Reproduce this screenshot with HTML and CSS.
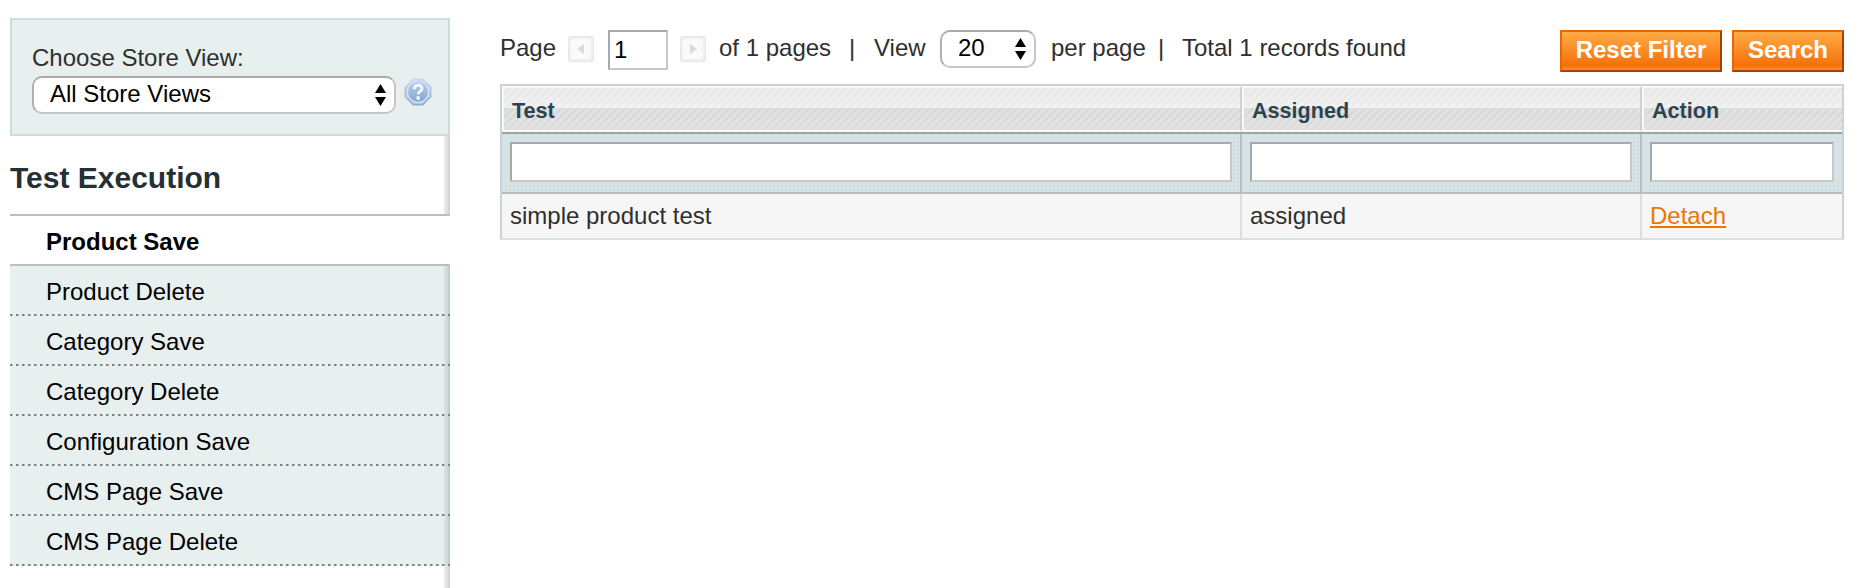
FILE: index.html
```html
<!DOCTYPE html>
<html lang="en">
<head>
<meta charset="utf-8">
<title>Test Execution</title>
<link rel="stylesheet" href="styles.css">
</head>
<body>
<div class="page">
  <aside class="side">
    <section class="switcher">
      <label class="switcher-label">Choose Store View:</label>
      <div class="switcher-row">
        <div class="select store-select"><span>All Store Views</span>
          <svg class="arrows" width="12" height="22" viewBox="0 0 12 22"><path d="M6.500 0L12 9H1zM6.500 22L12 13H1z"/></svg>
        </div>
        <svg class="help" width="28" height="28" viewBox="0 0 28 28">
          <defs><linearGradient id="help-fill" x1="0" y1="0" x2="0" y2="1"><stop offset="0" stop-color="#b4cbe7"/><stop offset="1" stop-color="#86a8ce"/></linearGradient>
          <linearGradient id="help-rim" x1="0" y1="0" x2="0" y2="1"><stop offset="0" stop-color="#c9dcf1"/><stop offset="1" stop-color="#8eabce"/></linearGradient></defs>
          <path d="M9 .5h10L27.500 9v10L19 27.500H9L.5 19V9z" fill="url(#help-rim)"/>
          <path d="M9.700 2.500h8.600l7.200 7.200v8.600l-7.200 7.200H9.700l-7.200-7.200V9.700z" fill="#cfdff1"/>
          <circle cx="14" cy="14" r="9.800" fill="url(#help-fill)"/>
          <path d="M10.300 11.200c0-5 7.700-5 7.700-.7 0 3-3.800 2.800-3.800 5.800" fill="none" stroke="#f3f7fc" stroke-width="3"/>
          <circle cx="14.200" cy="20" r="1.900" fill="#f3f7fc"/>
        </svg>
      </div>
    </section>
    <h3 class="side-title">Test Execution</h3>
    <ul class="tabs">
      <li class="tab active">Product Save</li>
      <li class="tab">Product Delete</li>
      <li class="tab">Category Save</li>
      <li class="tab">Category Delete</li>
      <li class="tab">Configuration Save</li>
      <li class="tab">CMS Page Save</li>
      <li class="tab">CMS Page Delete</li>
    </ul>
  </aside>
  <main class="main">
    <div class="toolbar">
      <span class="page-word">Page</span>
      <svg class="nav prev" width="26" height="26" viewBox="0 0 26 26"><rect x=".5" y=".5" width="25" height="25" rx="2" fill="#f0f0f0" stroke="#e6e6e6"/><rect x="3" y="3" width="20" height="20" rx="3" fill="#fafafa"/><path d="M16 8v10l-7-5z" fill="#dadada"/></svg>
      <input class="field page-input" value="1">
      <svg class="nav next" width="26" height="26" viewBox="0 0 26 26"><rect x=".5" y=".5" width="25" height="25" rx="2" fill="#f0f0f0" stroke="#e6e6e6"/><rect x="3" y="3" width="20" height="20" rx="3" fill="#fafafa"/><path d="M10 8v10l7-5z" fill="#dadada"/></svg>
      <span class="of-pages">of 1 pages</span>
      <span class="bar bar-first">|</span>
      <span class="view-word">View</span>
      <div class="select size-select"><span>20</span>
        <svg class="arrows" width="12" height="22" viewBox="0 0 12 22"><path d="M6.500 0L12 9H1zM6.500 22L12 13H1z"/></svg>
      </div>
      <span class="per-page">per page</span>
      <span class="bar bar-second">|</span>
      <span class="total">Total 1 records found</span>
      <div class="actions">
        <button class="btn btn-reset">Reset Filter</button>
        <button class="btn btn-search">Search</button>
      </div>
    </div>
    <div class="grid">
      <div class="row head"><div class="cell">Test</div><div class="cell">Assigned</div><div class="cell">Action</div></div>
      <div class="row filter"><div class="cell"><input class="field"></div><div class="cell"><input class="field"></div><div class="cell"><input class="field"></div></div>
      <div class="row data"><div class="cell">simple product test</div><div class="cell">assigned</div><div class="cell"><a class="link" href="#">Detach</a></div></div>
    </div>
  </main>
</div>
</body>
</html>
```
FILE: styles.css
```css
* { box-sizing: border-box; }
body {
  margin: 0;
  height: 588px;
  overflow: hidden;
  background: #fff;
  color: #2f2f2f;
  font: 24px/28px "Liberation Sans", Arial, sans-serif;
}
input, button { font: inherit; margin: 0; }
.page { display: flex; height: 588px; padding: 18px 20px 0 10px; gap: 50px; }

/* Sidebar */
.side {
  display: flex;
  flex-direction: column;
  width: 440px;
  background: linear-gradient(90deg, #ececec, #e2e2e2 50%, #cbcbcb) right / 6px 100% no-repeat;
}
.switcher {
  height: 118px;
  padding: 24px 14px 0 20px;
  border: 2px solid #cddddd;
  background: #e7efef;
}
.switcher-label { display: block; height: 32px; }
.switcher-row { display: flex; gap: 8px; }
.select {
  display: flex;
  align-items: center;
  justify-content: space-between;
  height: 38px;
  padding: 0 8px 2px 16px;
  border: 2px solid #c6c6c6;
  border-top-color: #a9a9a9;
  border-left-color: #b0b0b0;
  border-radius: 10px;
  background: #fff;
  color: #000;
}
.arrows { display: block; margin-top: 2px; }
.store-select { width: 364px; }
.help { margin-top: 2px; }
.side-title {
  height: 78px;
  margin: 0;
  padding-top: 24px;
  color: #253033;
  font-size: 30px;
  line-height: 36px;
}
.tabs { margin: 0; padding: 0; list-style: none; }
.tab {
  height: 50px;
  padding: 12px 36px 0;
  background:
    repeating-linear-gradient(90deg, #7c8282 0 2px, #b4baba 2px 3px, transparent 3px 6px) bottom / 100% 2px no-repeat,
    linear-gradient(90deg, #d8e4e4, #cfdddd 50%, #b5c6c6) right / 6px 100% no-repeat,
    #e7efef;
  color: #000;
}
.tab.active {
  height: 52px;
  border: solid #bebebe;
  border-width: 2px 0;
  background: #fff;
  font-weight: 700;
}

/* Pager and actions */
.main { width: 1344px; }
.toolbar { display: flex; height: 66px; padding-top: 12px; }
.toolbar > span { padding-top: 4px; white-space: nowrap; }
.page-word { width: 68px; }
.nav { margin-top: 6px; }
.field {
  display: block;
  height: 40px;
  padding: 0 6px 2px;
  border: 2px solid #c8c8c8;
  border-top-color: #a9a9a9;
  border-left-color: #a9a9a9;
  border-radius: 0;
  background: #fff;
  color: #000;
}
.page-input { width: 60px; margin: 0 12px 0 14px; padding: 0 4px; }
.of-pages { width: 143px; padding-left: 13px; }
.bar-first { width: 25px; }
.view-word { width: 66px; }
.size-select { width: 96px; }
.per-page { width: 122px; padding-left: 15px; }
.bar-second { width: 24px; }
.actions { display: flex; gap: 10px; margin-left: auto; }
.btn {
  height: 42px;
  padding: 0 0 2px;
  border: 2px solid #ed6502;
  border-right-color: #a04300;
  border-bottom-color: #a04300;
  border-radius: 0;
  background: linear-gradient(#ffac47, #f76f07 90%, #ff852e 96%);
  color: #fff;
  font-weight: 700;
}
.btn-reset { width: 162px; }
.btn-search { width: 112px; }

/* Data grid */
.grid { border: 2px solid #cbd3d4; border-bottom-color: #dadfe0; }
.row { display: grid; grid-template-columns: 740px 400px 200px; }
.cell { border-right: 2px solid #dadfe0; }
.row .cell:last-child { border-right: 0; }
.head { border-bottom: 2px solid #9ba5a3; }
.head .cell {
  height: 46px;
  padding: 9px 8px 0;
  border: 2px solid #f9f9f9;
  border-right-color: #cfcfcf;
  background:
    repeating-linear-gradient(135deg, rgba(255,255,255,.25) 0 2px, transparent 3.200px 4.500px, rgba(255,255,255,.25) 5.657px) padding-box,
    linear-gradient(#e6e6e6 0, #eee 20px, #d6d6d6 20px, #dcdcdc 100%) padding-box;
  color: #2d444f;
  font-size: 21.6px;
  font-weight: 700;
}
.filter { border-bottom: 2px solid #bcbcbc; }
.filter .cell {
  height: 58px;
  padding: 8px;
  border-right-color: #bcbcbc;
  background: radial-gradient(circle, #d9e7ea 1px, transparent 1.500px) 0 0 / 4px 4px, #d1e1e4;
}
.filter .field { width: 100%; }
.data .cell { height: 44px; padding: 8px; background: #f6f6f6; }
.link { color: #ea7601; text-decoration-thickness: 2px; text-underline-offset: 2px; }
```
